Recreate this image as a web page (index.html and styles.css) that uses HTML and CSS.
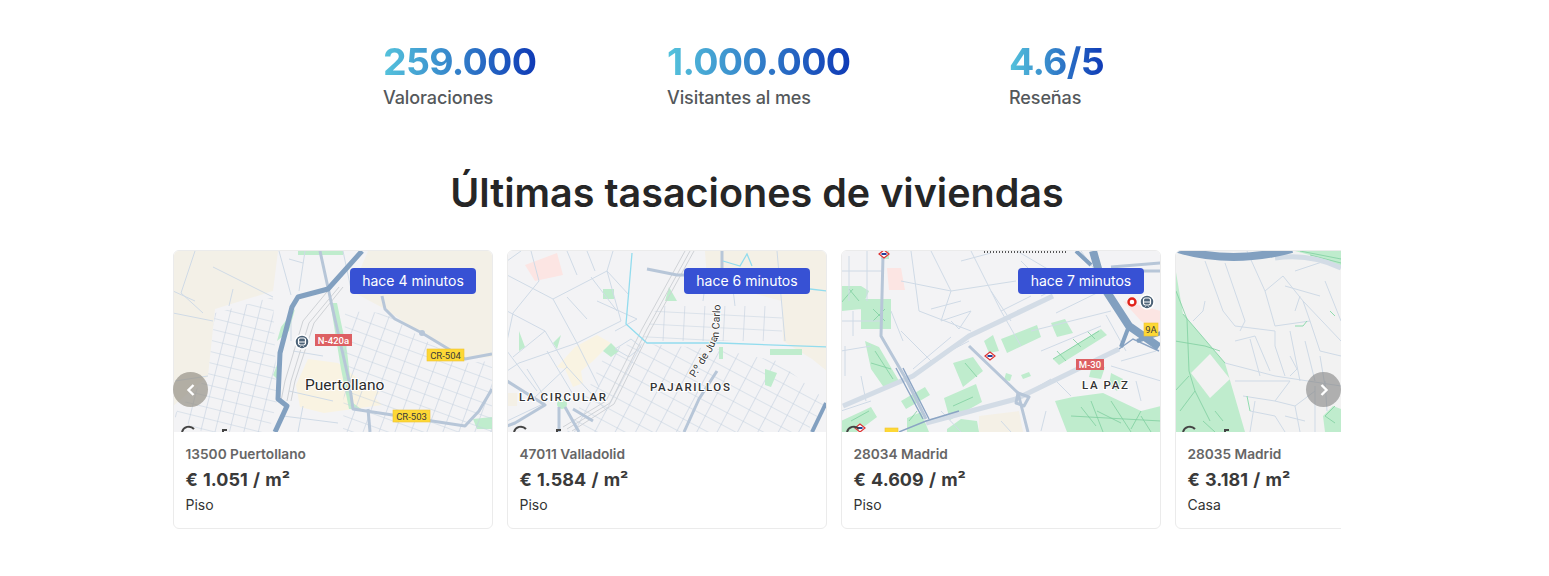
FILE: index.html
```html
<!DOCTYPE html>
<html lang="es">
<head>
  <meta charset="UTF-8" />
  <meta name="viewport" content="width=device-width, initial-scale=1.0" />
  <title>Últimas tasaciones de viviendas</title>
  <link rel="stylesheet" href="styles.css">
</head>
<body>
  <section class="stats">
    <div class="stat stat-a">
      <div class="stat-number">259.000</div>
      <div class="stat-label">Valoraciones</div>
    </div>
    <div class="stat stat-b">
      <div class="stat-number">1.000.000</div>
      <div class="stat-label">Visitantes al mes</div>
    </div>
    <div class="stat">
      <div class="stat-number">4.6/5</div>
      <div class="stat-label">Reseñas</div>
    </div>
  </section>

  <h2 class="title">Últimas tasaciones de viviendas</h2>

  <section class="carousel">
    <div class="track">

      <article class="card">
        <div class="map">
          <svg class="map-svg" viewBox="0 0 320 181">
            <defs>
              <pattern id="grid1a" width="14" height="11" patternUnits="userSpaceOnUse" patternTransform="rotate(14)">
                <path class="street street-grid" d="M0 0H14M0 0V11" />
              </pattern>
              <pattern id="grid1b" width="15" height="12" patternUnits="userSpaceOnUse" patternTransform="rotate(20)">
                <path class="street street-grid" d="M0 0H15M0 0V12" />
              </pattern>
            </defs>
            <rect class="land" width="320" height="181" />
            <path class="town" d="M0 181V155L35 125 42 58 100 40 105 0H195L178 40 212 58 250 84 292 108 320 106V181Z" />
            <path class="yellow" d="M135 108l30 4 28 22 14 8-6 4 8 8-58 8-24-6-4-22Z" />
            <path class="green" d="M122 58l-6 22-12 10 4-14ZM108 104l-4 24-4-4ZM158 52l6 0 10 48 6 52 8 6-12 0-8-40-10-62ZM125 0h45v4h-45ZM300 168l20-2v12h-16Z" />
            <path fill="url(#grid1a)" d="M42 62 100 46 104 150 96 181H30L0 165 35 125Z" />
            <path fill="url(#grid1b)" d="M172 60 212 62 250 88 292 112 320 110V181H170Z" />
            <g class="street">
              <path d="M22 0 8 42 30 62M0 40 22 50M0 62 40 70M40 16 100 46M60 38 56 55M2 130 35 125" />
              <path d="M106 0 118 44M132 0 126 40M116 8 130 12M170 0 178 38" />
              <path d="M118 60 118 90M120 100 150 105M116 140 160 150M110 165 165 172M130 155 125 181" />
            </g>
            <g class="rail">
              <path d="M158 36 130 70 112 130 108 150" />
              <path d="M166 36 136 72 118 130 114 150" />
              <path d="M170 36 141 72 122 130 118 150" />
            </g>
            <g class="road road-wide">
              <path d="M147 0 159 55 176 130 180 158 292 175 306 160 319 138" />
              <path d="M209 45 212 58 222 68 249 82 292 108 319 103" />
              <path d="M195 158 197 181" />
            </g>
            <path class="motorway motorway-mid" d="M189 0 155 38 125 46 119 56 107 102 105 148 114 155 102 181" />
            <circle class="rondel" cx="249" cy="82" r="3" />
            <path class="g-mark" d="M9 181a7 7 0 0 1 12-3M50 181v-2h4" />
            <g class="transit" transform="translate(129 91)">
              <circle r="7" />
              <rect x="-3.5" y="-4" width="7" height="7" rx="2" />
              <path d="M-3 0H3M-1.5 4.5-2.5 5.5M1.5 4.5 2.5 5.5" />
            </g>
            <rect class="shield-red" x="142" y="83" width="37" height="12" />
            <text class="shield-text shield-text-w" x="160.5" y="92.5">N-420a</text>
            <rect class="shield-yellow" x="254" y="98" width="37" height="12" />
            <text class="shield-text" x="272.5" y="107.5">CR-504</text>
            <rect class="shield-yellow" x="220" y="159" width="37" height="12" />
            <text class="shield-text" x="238.5" y="168.5">CR-503</text>
            <text class="place" x="132" y="139">Puertollano</text>
          </svg>
          <span class="badge">hace 4 minutos</span>
        </div>
        <div class="card-body">
          <div class="card-zip">13500 Puertollano</div>
          <div class="card-price">€ 1.051 / m²</div>
          <div class="card-type">Piso</div>
        </div>
      </article>

      <article class="card">
        <div class="map">
          <svg class="map-svg" viewBox="0 0 320 181">
            <defs>
              <pattern id="grid2a" width="18" height="13" patternUnits="userSpaceOnUse" patternTransform="rotate(28)">
                <path class="street street-grid" d="M0 0H18M0 0V13" />
              </pattern>
              <pattern id="grid2b" width="20" height="13" patternUnits="userSpaceOnUse" patternTransform="rotate(3)">
                <path class="street street-grid" d="M0 0H20M0 0V13" />
              </pattern>
            </defs>
            <rect class="town" width="320" height="181" />
            <path class="beige" d="M198 0H320V120L305 108 276 90 275 50 200 30Z" />
            <path class="yellow" d="M50 116 68 96 90 84 104 92 86 110 74 120 76 132 66 136 58 118Z" />
            <path class="beige" d="M0 142H10V155H0Z" />
            <path class="pink" d="M18 14 50 2 56 24 28 30Z" />
            <path fill="url(#grid2a)" d="M100 100 125 92 210 98 270 110 320 150 300 181H60Z" />
            <path fill="url(#grid2b)" d="M150 55H275V90H135Z" />
            <path class="green" d="M96 38h11v10H96ZM162 36l8 14h-12ZM12 80l6 16-6 4ZM46 92l8-8-4 14ZM96 100l8-8 8 8-8 6ZM263 98h32v6h-32ZM258 118l12 4-6 14-6-2ZM212 96h4v12h-4Z" />
            <circle class="green" cx="55" cy="153" r="5" />
            <g class="street">
              <path d="M0 24 46 48 70 92 92 136M24 0 32 30 6 62 0 90M46 48 100 20 106 0M0 60 38 80 60 116 100 160M70 92 12 112 0 120M60 116 26 148M38 80 6 106M100 20 114 70 70 92" />
              <path d="M100 20 122 44M84 26 110 60M60 46 80 68M108 80 130 68 90 50M124 88 108 98 122 106 134 96ZM0 100 30 140M14 0 0 10M60 0 70 24M80 0 88 20" />
              <path d="M270 0 278 90M200 20 196 50M225 30 228 55M0 170 38 152M20 118 40 150M40 100 70 150" />
            </g>
            <g class="rail">
              <path d="M183 0 140 78 103 152 60 178" />
              <path d="M178 0 135 78 99 150 56 176" />
              <path d="M187 0 144 78 107 153 65 180" />
            </g>
            <g class="road road-wide">
              <path d="M0 130 38 154 8 172 0 175" />
              <path d="M52 156 52 181M58 156 72 181M66 158 86 170" />
              <path d="M210 120 192 148 177 181" />
              <path d="M140 18 170 24 200 24" />
              <path d="M215 0V22" />
            </g>
            <path class="river" d="M125 2 119 73 140 92 213 92 320 96M216 10 233 15 240 3 245 15M303 38 320 40" />
            <path class="motorway" d="M319 152 305 181" />
            <path class="g-mark" d="M7 181a7 7 0 0 1 12-3M50 181v-2h4" />
            <text class="label" x="12" y="150">LA CIRCULAR</text>
            <text class="label" x="143" y="140">PAJARILLOS</text>
            <path id="juan" class="no-line" d="M188 127 206 98 212 84 214 42" />
            <text class="along"><textPath href="#juan">P.º de Juan Carlo</textPath></text>
          </svg>
          <span class="badge">hace 6 minutos</span>
        </div>
        <div class="card-body">
          <div class="card-zip">47011 Valladolid</div>
          <div class="card-price">€ 1.584 / m²</div>
          <div class="card-type">Piso</div>
        </div>
      </article>

      <article class="card">
        <div class="map">
          <svg class="map-svg" viewBox="0 0 320 181">
            <rect class="town" width="320" height="181" />
            <path class="pink" d="M46 17h14l4 22H48ZM282 50l38 10v22L300 70Z" />
            <path class="beige" d="M138 165 178 160 182 181H138Z" />
            <path class="green" d="M0 35H20L28 40 20 58 0 60ZM20 48h30v30H20ZM24 90l14 6 20 34-14 8-14-20ZM40 0h8v8h-8ZM112 112l20-6 10 14-20 16ZM103 147l32-14 6 18-32 18ZM60 150l24-14 5 8-24 14ZM66 167l14-6 8 20H66ZM0 170l30-14 6 10-20 15H0ZM160 88l36-14 4 12-34 16ZM210 72l14-4 8 14-16 4ZM212 108l48-30 6 6-48 30ZM165 122l6 2-2 6-6-1ZM180 124l8-3 2 4-8 3ZM143 90 152 84 158 100 148 102ZM250 118l14-2-4 12-12-2ZM270 122l12 6-6 12-8-6Z" />
            <path class="green" d="M214 150 232 146 262 142 300 160 320 155V181H226Z" />
            <path class="green" d="M106 178l14-10 16 2 2 11H106Z" />
            <g class="park-line">
              <path d="M32 58 44 70M44 58 32 70M8 38 18 50M0 52 12 38M34 100 52 128M30 112 50 118M256 160 280 172M240 156 255 175M270 150 290 181M300 160 290 178M124 112 136 126M112 155 132 146M68 170 76 160M10 170 28 160" />
              <path d="M212 108l46-28M225 110 216 100M240 96 232 88M254 88 246 80M230 165 320 170M250 150 262 181M300 165 310 181" />
            </g>
            <g class="street">
              <path d="M0 20H42M8 5V50M26 0V50M0 70H40M12 60V85M70 0 78 60 130 80M90 0 110 40 175 30M110 40 100 70M130 0 160 60 190 45M160 60 180 95M60 30 110 40M100 70 130 60 118 78 110 70M90 58 120 50" />
              <path d="M60 80 90 110 128 90M72 118 110 86M200 45 240 25M215 62 260 40M240 0 262 30M190 80 270 60M200 100 260 75M265 64 285 100M176 0 210 20 214 40" />
              <path d="M0 100 30 95M4 95V125M20 125 25 150M100 160 120 181M215 130 230 145M280 110 315 100M270 115 320 130M295 130 300 150M0 160 30 150" />
              <path d="M186 142 210 128M200 180 205 160M160 170 170 181M50 60 62 90M120 10 150 2M150 40 170 70M180 10 200 30" />
            </g>
            <g class="road road-pale">
              <path d="M85 172 175 148 278 98" />
              <path d="M2 155 72 125 128 85 212 45" />
            </g>
            <g class="road road-wide">
              <path d="M42 5 40 85 65 128 85 168" />
              <path d="M128 95 177 142 187 181" />
              <path d="M300 20H320M270 16 320 12" />
              <path d="M177 142 175 152 183 155 188 146Z" />
            </g>
            <g class="tunnel">
              <path d="M55 117 82 168M62 117 88 168" />
              <path d="M58 181 85 170 118 160" />
              <path d="M278 98 292 88 318 100" />
            </g>
            <path class="motorway motorway-wide" d="M252 0 262 35 288 75 318 96" />
            <path class="motorway" d="M288 75 280 96M296 90 320 82M235 0 250 14" />
            <path class="clipped-label" d="M143 1H225" />
            <g class="metro" transform="translate(43 3)"><path d="M-5 0 0-4 5 0 0 4Z" /><rect x="-2.5" y="-1" width="5" height="2" /></g>
            <g class="metro" transform="translate(149 105)"><path d="M-5 0 0-4 5 0 0 4Z" /><rect x="-2.5" y="-1" width="5" height="2" /></g>
            <g class="metro" transform="translate(19 177)"><path d="M-5 0 0-4 5 0 0 4Z" /><rect x="-2.5" y="-1" width="5" height="2" /></g>
            <path class="g-mark" d="M6 181a7 7 0 0 1 12-3" />
            <rect class="shield-yellow" x="44" y="177" width="13" height="6" />
            <circle class="red-stop" cx="291" cy="51" r="3.5" />
            <g class="transit" transform="translate(306 51)">
              <circle r="7" />
              <rect x="-3.5" y="-4" width="7" height="7" rx="2" />
              <path d="M-3 0H3M-1.5 4.5-2.5 5.5M1.5 4.5 2.5 5.5" />
            </g>
            <rect class="shield-red" x="235" y="108" width="28" height="11" />
            <text class="shield-text shield-text-w" x="249" y="117">M-30</text>
            <rect class="shield-yellow" x="303" y="72" width="14" height="13" />
            <text class="shield-text" x="310" y="82">9A</text>
            <text class="label" x="241" y="138">LA PAZ</text>
          </svg>
          <span class="badge">hace 7 minutos</span>
        </div>
        <div class="card-body">
          <div class="card-zip">28034 Madrid</div>
          <div class="card-price">€ 4.609 / m²</div>
          <div class="card-type">Piso</div>
        </div>
      </article>

      <article class="card">
        <div class="map">
          <svg class="map-svg" viewBox="0 0 320 181">
            <rect class="town town-plain" width="320" height="181" />
            <path class="green" d="M0 15 8 63 50 112 70 181H0ZM120 0H166V15L135 4ZM150 181 148 165 158 155 166 158V181Z" />
            <path class="town-plain" d="M35 103 55 128 35 147 16 122Z" />
            <g class="park-line">
              <path d="M1 40 12 68 14 120 20 140 35 170M0 90 30 95 45 100M14 125 0 140M20 140 5 160M40 160 48 170M8 63 50 112M28 170 40 181" />
              <path d="M160 172 150 165 160 155M135 4 166 12M125 0 166 8" />
            </g>
            <g class="street">
              <path d="M30 10 48 60 60 75M50 12 70 70 65 80M30 50 28 60 18 70M60 75 100 80M72 0 90 40 100 75M90 40 108 25 128 50 135 70 100 75M120 20 150 10M110 35 145 45M125 45 120 60M128 50 166 90M150 30 166 70M135 70 145 100 166 105" />
              <path d="M50 112 100 125 166 135M60 90 80 85 95 120M100 80 100 95 110 125M75 88 85 125M115 80 125 130M130 90 140 130M145 105 150 135M115 105 122 118 115 125" />
              <path d="M68 145 100 150 115 130M80 150 75 181M100 150 120 155 140 140M75 160 100 165 110 181M120 155 125 181M140 135 140 181M150 130 152 160M60 130 115 130M110 165 130 170" />
            </g>
            <path class="green-line" d="M120 75 128 75 132 70M155 60 160 65M72 145 75 160" />
            <path class="road road-pale" d="M100 7Q135 2 166 17" />
            <path class="motorway motorway-wide" d="M3 -2Q57 14 117 -2" />
            <path class="g-mark" d="M8 181a7 7 0 0 1 12-3M50 181v-2h4" />
          </svg>
        </div>
        <div class="card-body">
          <div class="card-zip">28035 Madrid</div>
          <div class="card-price">€ 3.181 / m²</div>
          <div class="card-type">Casa</div>
        </div>
      </article>

    </div>

    <button class="arrow arrow-left" aria-label="Anterior">
      <svg viewBox="0 0 12 14" class="arrow-icon"><path d="M8.5 2 3.5 7l5 5" /></svg>
    </button>
    <button class="arrow arrow-right" aria-label="Siguiente">
      <svg viewBox="0 0 12 14" class="arrow-icon"><path d="M3.5 2 8.5 7l-5 5" /></svg>
    </button>
  </section>
</body>
</html>
```

FILE: styles.css
```css
* { box-sizing: border-box; margin: 0; padding: 0; }
body { font-family: Inter, "Noto Sans", Arial, sans-serif; background: #fff; padding-right: 35px; height: 576px; overflow: hidden; }

.stats { display: flex; padding: 39px 0 0 383px; }
.stat-a { width: 284px; }
.stat-b { width: 342px; }
.stat-number { display: inline-block; font-size: 37.5px; line-height: 46px; font-weight: 700; letter-spacing: -0.7px; background: linear-gradient(90deg, #55c3dc 0%, #0f3ab6 100%); -webkit-background-clip: text; background-clip: text; color: transparent; }
.stat-label { font-size: 18px; line-height: 25px; font-weight: 500; letter-spacing: -0.1px; color: #54585b; }

.title { text-align: center; font-size: 39.5px; line-height: 50px; font-weight: 600; color: #262626; margin-top: 58px; }

.carousel { position: relative; width: 1168px; margin: 32px auto 0; overflow: hidden; }
.track { display: flex; gap: 14px; }
.card { flex: 0 0 320px; height: 279px; border: 1px solid #ebebeb; border-radius: 6px; overflow: hidden; background: #fff; }
.map { position: relative; height: 181px; }
.map-svg { display: block; width: 320px; height: 181px; margin-left: -1px; }
.badge { position: absolute; top: 17px; right: 16px; width: 126px; height: 26px; line-height: 26px; text-align: center; font-size: 14px; color: #fff; background: #3751d4; border-radius: 4px; }

.card-body { padding: 13px 11.5px 0; }
.card-zip { font-size: 13.7px; line-height: 18px; font-weight: 600; color: #666; }
.card-price { font-size: 18px; line-height: 24px; font-weight: 700; word-spacing: 1px; color: #3a3a3a; margin-top: 5px; }
.card-type { font-size: 14px; line-height: 18px; color: #333; margin-top: 4px; }

.arrow { position: absolute; top: 122px; width: 35px; height: 35px; border: 0; border-radius: 50%; display: flex; align-items: center; justify-content: center; }
.arrow-left { left: 0; background: rgba(150, 145, 135, 0.7); }
.arrow-right { right: 0; background: rgba(130, 130, 130, 0.6); }
.arrow-icon { width: 12px; height: 14px; fill: none; stroke: #fff; stroke-width: 2.4; }

/* map drawing */
.land { fill: #f3f0e7; }
.town { fill: #f3f3f5; }
.town-plain { fill: #f2f2f2; }
.beige { fill: #f4f0e6; }
.yellow { fill: #f9f3e2; }
.pink { fill: #fce5e3; }
.green { fill: #bfeccd; }
.street { fill: none; stroke: #cfdae6; stroke-width: 1; }
.street-grid { stroke: #c4d1df; stroke-width: 1.2; }
.rail { fill: none; stroke: #cfd2d6; stroke-width: 1; }
.road { fill: none; stroke: #b7c6d8; stroke-width: 2.2; stroke-linejoin: round; }
.road-wide { stroke-width: 3; }
.road-pale { stroke: #d3dce6; stroke-width: 5; }
.motorway { fill: none; stroke: #82a0c0; stroke-width: 4; stroke-linejoin: round; }
.motorway-mid { stroke-width: 5; }
.motorway-wide { stroke-width: 8; }
.tunnel { fill: none; stroke: #8ba4c4; stroke-width: 1.4; }
.river { fill: none; stroke: #92dcee; stroke-width: 1.3; }
.park-line { fill: none; stroke: #7fcfa0; stroke-width: 0.8; }
.green-line { fill: none; stroke: #8fdcae; stroke-width: 1; }
.clipped-label { fill: none; stroke: #555; stroke-width: 2; stroke-dasharray: 1 2; }
.g-mark { fill: none; stroke: #444; stroke-width: 2; }
.rondel { fill: #b7c6d8; }
.no-line { fill: none; }
.transit circle { fill: #4d6378; stroke: #fff; stroke-width: 1.5; }
.transit rect { fill: none; stroke: #fff; stroke-width: 1.2; }
.transit path { fill: none; stroke: #fff; stroke-width: 1; }
.shield-red { fill: #dd6063; }
.shield-yellow { fill: #fdd835; stroke: #f0c330; stroke-width: 0.6; }
.shield-text { font-family: Roboto, sans-serif; font-size: 9.5px; text-anchor: middle; fill: #3a3a3a; }
.shield-text-w { fill: #fff; font-weight: 500; }
.place { font-family: Roboto, sans-serif; font-size: 15.5px; fill: #2a2a2a; stroke: #fff; stroke-width: 2px; paint-order: stroke; }
.label { font-family: Roboto, sans-serif; font-size: 11.5px; font-weight: 500; letter-spacing: 1.6px; fill: #333; stroke: #fff; stroke-width: 2px; paint-order: stroke; }
.along { font-family: Roboto, sans-serif; font-size: 10.5px; fill: #333; stroke: #fff; stroke-width: 1.5px; paint-order: stroke; }
.metro path { fill: #fff; stroke: #d33; stroke-width: 1.2; }
.metro rect { fill: #23409a; }
.red-stop { fill: #fff; stroke: #e2231a; stroke-width: 2.4; }
```
